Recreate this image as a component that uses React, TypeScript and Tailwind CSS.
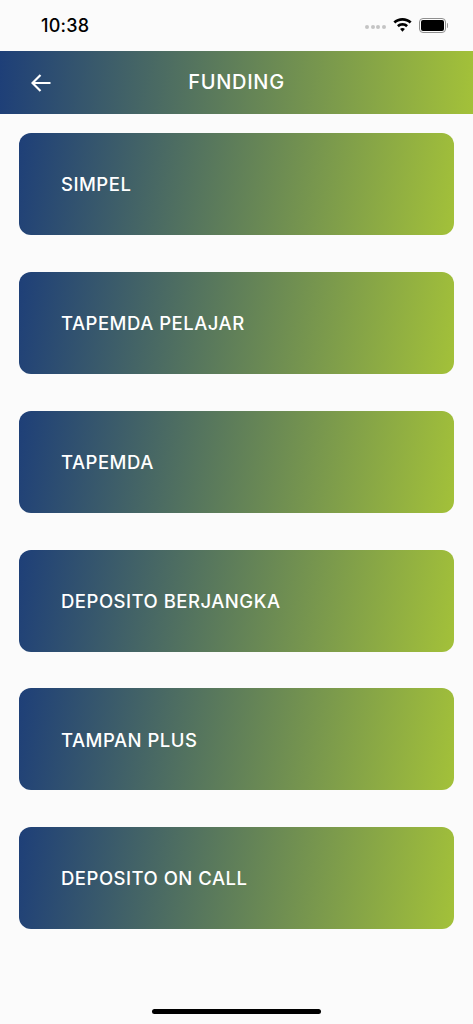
const products = ['SIMPEL', 'TAPEMDA PELAJAR', 'TAPEMDA', 'DEPOSITO BERJANGKA', 'TAMPAN PLUS', 'DEPOSITO ON CALL'];

const App = () => {
    return (
        <div className="relative h-[1024px] w-[473px] overflow-hidden bg-[#fbfbfb] font-['Inter',sans-serif] text-white">
            {/* status bar */}
            <div className="flex h-[50.5px] items-center justify-between pl-[41px] pr-[25px]">
                <span className="text-[18px] font-medium tracking-[0.2px] text-black">10:38</span>
                <div className="flex items-center">
                    <div className="mr-[7px] mt-[4px] flex gap-[1.5px]">
                        <span className="h-[4px] w-[4px] rounded-full bg-[#c4c4c4]" />
                        <span className="h-[4px] w-[4px] rounded-full bg-[#c4c4c4]" />
                        <span className="h-[4px] w-[4px] rounded-full bg-[#c4c4c4]" />
                        <span className="h-[4px] w-[4px] rounded-full bg-[#c4c4c4]" />
                    </div>
                    <svg width="19" height="14" viewBox="0 0 19 14" className="mr-[7px]">
                        <path d="M9.5 0C6 0 2.8 1.3.4 3.6l1.9 2C4.2 3.8 6.7 2.8 9.5 2.8s5.3 1 7.2 2.8l1.9-2C16.200 1.300 13 0 9.500 0z" fill="#000" />
                        <path d="M9.500 5C7.400 5 5.500 5.800 4 7.200l1.900 2C6.900 8.300 8.100 7.800 9.500 7.800s2.600.5 3.600 1.400l1.900-2C13.500 5.800 11.600 5 9.500 5z" fill="#000" />
                        <path d="M9.500 10c-1 0-1.800.4-2.400 1l2.400 2.700 2.400-2.700c-.6-.6-1.400-1-2.400-1z" fill="#000" />
                    </svg>
                    <div className="flex items-center">
                        <div className="flex h-[15px] w-[27px] items-center justify-center rounded-[4px] border border-[#8f8f8f]">
                            <div className="h-[11px] w-[23px] rounded-[2px] bg-black" />
                        </div>
                        <div className="ml-[1px] h-[5px] w-[1.5px] rounded-r-full bg-[#9a9a9a]" />
                    </div>
                </div>
            </div>

            {/* header */}
            <div className="relative flex h-[63.5px] items-center justify-center bg-[linear-gradient(92deg,#1e3f78,#a3c139)]">
                <svg width="20" height="18" viewBox="0 0 20 18" fill="none" stroke="#fff" strokeWidth="2.200" className="absolute left-[31px] top-[23px]">
                    <path d="M19.500 9H1.500M9.500 1L1.500 9l8 8" />
                </svg>
                <span className="text-[20px] font-medium tracking-[0.7px]">FUNDING</span>
            </div>

            {/* product list */}
            <div className="flex flex-col gap-[36.85px] pl-[19px] pt-[19px]">
                {products.map((name) => (
                    <div
                        key={name}
                        className="flex h-[102px] w-[435px] items-center rounded-[12px] bg-[linear-gradient(98deg,#1e3f78,#a3c139)] pl-[42px] pt-[2px]"
                    >
                        <span className="text-[18.5px] font-medium tracking-[0.5px]">{name}</span>
                    </div>
                ))}
            </div>

            {/* home indicator */}
            <div className="absolute bottom-[10px] left-[152px] h-[5px] w-[169px] rounded-full bg-black" />
        </div>
    );
};

export default App;
